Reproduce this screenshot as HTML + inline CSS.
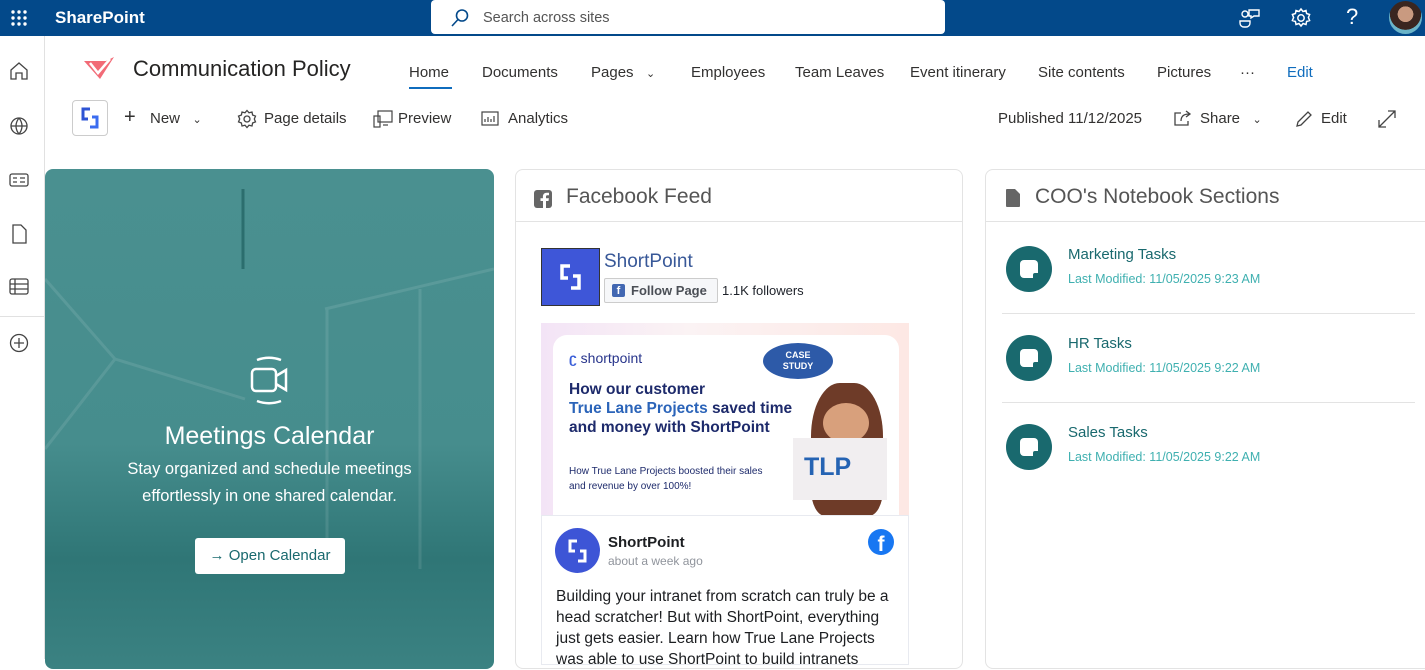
<!DOCTYPE html>
<html><head><meta charset="utf-8"><style>
*{box-sizing:border-box;margin:0;padding:0}
body{width:1425px;height:659px;overflow:hidden;background:#fff;font-family:"Liberation Sans",sans-serif;position:relative;color:#323130}
.abs{position:absolute}
.top{left:0;top:0;width:1425px;height:36px;background:#03498a}
.rail{left:0;top:36px;width:45px;height:623px;border-right:1px solid #e1e1e1;background:#fff}
.nav{top:64px;font-size:15px;color:#323130}
.cmd{top:110px;font-size:15px;color:#323130}
.card{border:1px solid #e3e3e3;border-radius:8px;background:#fff}
.sub{font-size:12.5px;color:#3fb0b0}
.tt{font-size:15px;color:#19696e}
.circ{width:46px;height:46px;border-radius:50%;background:#19696e}
.circ:after{content:"";position:absolute;left:14px;top:14px;width:18px;height:18px;background:#fff;border-radius:4px 4px 0 4px}
.circ:before{content:"";position:absolute;left:27px;top:27px;width:6px;height:6px;background:#19696e;z-index:1;border-top-left-radius:2px}
</style></head><body>
<div class="abs top"></div>
<svg class="abs" style="left:10px;top:9px" width="18" height="18" fill="#fff"><circle cx="3" cy="3" r="1.7"/><circle cx="9" cy="3" r="1.7"/><circle cx="15" cy="3" r="1.7"/><circle cx="3" cy="9" r="1.7"/><circle cx="9" cy="9" r="1.7"/><circle cx="15" cy="9" r="1.7"/><circle cx="3" cy="15" r="1.7"/><circle cx="9" cy="15" r="1.7"/><circle cx="15" cy="15" r="1.7"/></svg>
<div class="abs" style="left:55px;top:8px;color:#fff;font-size:17px;font-weight:bold">SharePoint</div>
<div class="abs" style="left:431px;top:0;width:514px;height:34px;background:#fff;border-radius:4px"></div>
<svg class="abs" style="left:450px;top:8px" width="20" height="20" fill="none" stroke="#03498a" stroke-width="1.6"><circle cx="12" cy="7.5" r="5.5"/><path d="M8 11.5 2 18"/></svg>
<div class="abs" style="left:483px;top:10px;font-size:14.5px;color:#555">Search across sites</div>
<svg class="abs" style="left:1239px;top:7px" width="22" height="22" fill="none" stroke="#fff" stroke-width="1.4"><circle cx="6" cy="7" r="3"/><path d="M1 14h10v2a4 4 0 0 1-4 4H5a4 4 0 0 1-4-4zM10 3h10v6h-5l-3 2v-2h-2z"/></svg>
<svg class="abs" style="left:1290px;top:7px" width="22" height="22" fill="none" stroke="#fff" stroke-width="1.5"><circle cx="11" cy="11" r="3.2"/><path d="M11 2l2 2.5 3-1 .6 3 3 1-1.2 3 1.2 3-3 1-.6 3-3-1-2 2.5-2-2.5-3 1-.6-3-3-1 1.2-3-1.2-3 3-1 .6-3 3 1z"/></svg>
<div class="abs" style="left:1346px;top:4px;color:#fff;font-size:22px">?</div>
<div class="abs" style="left:1389px;top:1px;width:33px;height:33px;border-radius:50%;background:radial-gradient(circle at 50% 40%,#c99a80 0 30%,#3a2620 31% 60%,#6ab4c8 61%)"></div>
<div class="abs rail"></div>
<svg class="abs" style="left:8px;top:60px" width="22" height="320" fill="none" stroke="#444" stroke-width="1.3">
<path d="M3 10 11 3l8 7v9h-5v-6H8v6H3z"/>
<circle cx="11" cy="66" r="8"/><path d="M3 66h16M11 58c-4 5-4 11 0 16M11 58c4 5 4 11 0 16"/>
<rect x="2" y="114" width="18" height="12" rx="2"/><path d="M5 118h4M5 122h4M12 118h5M12 122h5"/>
<path d="M5 165h8l5 5v13H5z"/>
<rect x="2" y="219" width="18" height="15" rx="2"/><path d="M2 224h18M2 229h18M7 219v15"/>
<circle cx="11" cy="283" r="8.5"/><path d="M11 278v10M6 283h10"/>
</svg>
<div class="abs" style="left:0;top:316px;width:44px;border-top:1px solid #e1e1e1"></div>
<svg class="abs" style="left:82px;top:55px" width="34" height="26"><path d="M2 6h22l8-4-14 22L2 6z" fill="#f26b77"/><path d="M8 8l8 10 12-14" stroke="#fff" stroke-width="2.5" fill="none"/></svg>
<div class="abs" style="left:133px;top:56px;font-size:22px;color:#252423">Communication Policy</div>
<div class="abs nav" style="left:409px">Home</div>
<div class="abs" style="left:409px;top:87px;width:43px;height:2px;background:#0f6cbd"></div>
<div class="abs nav" style="left:482px">Documents</div>
<div class="abs nav" style="left:591px">Pages&nbsp;&nbsp;&nbsp;<span style="font-size:11px">⌄</span></div>
<div class="abs nav" style="left:691px">Employees</div>
<div class="abs nav" style="left:795px">Team Leaves</div>
<div class="abs nav" style="left:910px">Event itinerary</div>
<div class="abs nav" style="left:1038px">Site contents</div>
<div class="abs nav" style="left:1157px">Pictures</div>
<div class="abs nav" style="left:1240px">···</div>
<div class="abs nav" style="left:1287px;color:#0f6cbd">Edit</div>
<div class="abs" style="left:72px;top:100px;width:36px;height:36px;border:1px solid #ccc;border-radius:4px"></div>
<svg class="abs" style="left:80px;top:107px" width="20" height="22" fill="none" stroke-width="3"><path d="M10 2H3v10h5" stroke="#2e54d4"/><path d="M10 20h7V10h-5" stroke="#3b6cf0"/></svg>
<div class="abs cmd" style="left:124px;font-size:20px;top:106px;font-weight:lighter">+</div>
<div class="abs cmd" style="left:150px">New&nbsp;&nbsp;&nbsp;<span style="font-size:11px">⌄</span></div>
<svg class="abs" style="left:237px;top:109px" width="20" height="20" fill="none" stroke="#444" stroke-width="1.3"><circle cx="10" cy="10" r="3"/><path d="M10 1.5l2 2.3 3-.8.6 3 2.9 1.1-1.2 2.9 1.2 2.9-2.9 1.1-.6 3-3-.8-2 2.3-2-2.3-3 .8-.6-3-2.9-1.1 1.2-2.9-1.2-2.9 2.9-1.1.6-3 3 .8z"/></svg>
<div class="abs cmd" style="left:264px">Page details</div>
<svg class="abs" style="left:373px;top:110px" width="20" height="18" fill="none" stroke="#444" stroke-width="1.2"><rect x="5" y="1" width="14" height="11"/><rect x="1" y="6" width="6" height="11"/><path d="M10 15h5"/></svg>
<div class="abs cmd" style="left:398px">Preview</div>
<svg class="abs" style="left:481px;top:111px" width="18" height="15" fill="none" stroke="#444" stroke-width="1.2"><rect x="1" y="1" width="16" height="13"/><path d="M4 11V8M7 11V6M10 11V8M13 11V5"/></svg>
<div class="abs cmd" style="left:508px">Analytics</div>
<div class="abs cmd" style="left:998px">Published 11/12/2025</div>
<svg class="abs" style="left:1173px;top:109px" width="20" height="18" fill="none" stroke="#444" stroke-width="1.3"><path d="M8 4H2v12h13v-4M8 12c0-5 3-7 8-7M13 2l4 3-4 3"/></svg>
<div class="abs cmd" style="left:1200px">Share&nbsp;&nbsp;&nbsp;<span style="font-size:11px">⌄</span></div>
<svg class="abs" style="left:1294px;top:109px" width="20" height="20" fill="none" stroke="#444" stroke-width="1.3"><path d="M3 17l1-4L14 3l3 3L7 16z"/></svg>
<div class="abs cmd" style="left:1321px">Edit</div>
<svg class="abs" style="left:1378px;top:110px" width="18" height="18" fill="none" stroke="#444" stroke-width="1.3"><path d="M1 17 17 1M10 1h7v7M1 10v7h7"/></svg>

<div class="abs" style="left:45px;top:169px;width:449px;height:500px;border-radius:8px;background:linear-gradient(180deg,#4a9090 0%,#468d8d 55%,#2f7676 78%,#3b8282 100%);overflow:hidden">
<svg class="abs" style="left:0;top:0" width="449" height="500" fill="none" stroke="rgba(255,255,255,.1)" stroke-width="3"><path d="M0 110 70 190 0 280M70 190 200 230M280 140 449 100M282 140V400M375 120V400"/><path d="M198 20V100" stroke="rgba(0,60,60,.4)"/></svg>
<svg class="abs" style="left:205px;top:186px" width="45" height="52" fill="none" stroke="#fff" stroke-width="2.5"><rect x="2" y="14" width="24" height="22" rx="4"/><path d="M26 21l10-6v20l-10-6M7 5c8-3 16-3 24 0M7 46c8 3 16 3 24 0"/></svg>
<div class="abs" style="left:0;width:449px;top:253px;text-align:center;color:#fff;font-size:25px">Meetings Calendar</div>
<div class="abs" style="left:0;width:449px;top:287px;text-align:center;color:#fff;font-size:16.5px;line-height:27px">Stay organized and schedule meetings<br>effortlessly in one shared calendar.</div>
<div class="abs" style="left:150px;top:369px;width:150px;height:36px;background:#fff;border-radius:3px;color:#19696e;font-size:15px;text-align:center;line-height:36px">→ Open Calendar</div>
</div>

<div class="abs card" style="left:515px;top:169px;width:448px;height:500px"></div>
<svg class="abs" style="left:533px;top:189px" width="20" height="20"><rect x="1" y="1" width="18" height="18" rx="3" fill="#666"/><path d="M13 19v-7h2.5l.4-2.8H13V7.6c0-.8.3-1.3 1.4-1.3H16V3.8c-.3 0-1.2-.1-2.3-.1-2.3 0-3.8 1.4-3.8 3.9v1.6H7.5V12H10v7z" fill="#fff"/></svg>
<div class="abs" style="left:566px;top:185px;font-size:21px;color:#555">Facebook Feed</div>
<div class="abs" style="left:516px;top:221px;width:446px;border-top:1px solid #e3e3e3"></div>
<div class="abs" style="left:541px;top:248px;width:59px;height:58px;background:#3e56d8;border:1px solid #333"></div>
<svg class="abs" style="left:559px;top:264px" width="24" height="26" fill="none" stroke="#fff" stroke-width="3.5"><path d="M11 2H3v12h6"/><path d="M12 24h8V12h-6"/></svg>
<div class="abs" style="left:604px;top:251px;font-size:19px;color:#385898">ShortPoint</div>
<div class="abs" style="left:604px;top:278px;width:114px;height:25px;border:1px solid #ccc;border-radius:2px;background:#f6f7f9;font-size:13px;font-weight:bold;color:#4b4f56;line-height:23px;padding-left:26px">Follow Page</div>
<div class="abs" style="left:612px;top:284px;width:13px;height:13px;background:#4267b2;border-radius:2px;color:#fff;font-size:11px;font-weight:bold;text-align:center;line-height:15px">f</div>
<div class="abs" style="left:722px;top:283px;font-size:13px;color:#1d2129">1.1K followers</div>
<div class="abs" style="left:541px;top:323px;width:368px;height:193px;background:linear-gradient(90deg,#f3e4f6,#fbf3f4 40%,#fde8e4);overflow:hidden">
<div class="abs" style="left:12px;top:12px;width:346px;height:181px;background:#fff;border-radius:14px 14px 0 0"></div>
<div class="abs" style="left:28px;top:27px;font-size:14px;color:#27348b"><b style="color:#3b5fd8">ʗ</b> shortpoint</div>
<div class="abs" style="left:222px;top:20px;width:70px;height:36px;border-radius:50%;background:#2d5aa8;color:#fff;font-size:9px;font-weight:bold;text-align:center;line-height:11px;padding-top:7px">CASE<br>STUDY</div>
<div class="abs" style="left:28px;top:57px;font-size:15.5px;font-weight:bold;color:#1d2a6b;line-height:19px">How our customer<br><span style="color:#2b64b9">True Lane Projects</span> saved time<br>and money with ShortPoint</div>
<div class="abs" style="left:28px;top:141px;font-size:10px;color:#1d2a6b;line-height:15px">How True Lane Projects boosted their sales<br>and revenue by over 100%!</div>
<div class="abs" style="left:270px;top:60px;width:72px;height:133px;border-radius:40% 40% 20% 20%;background:#6e3b28"></div>
<div class="abs" style="left:282px;top:80px;width:46px;height:40px;border-radius:50%;background:#d8a07c"></div>
<div class="abs" style="left:252px;top:115px;width:94px;height:62px;background:#f1eef0"></div>
<div class="abs" style="left:263px;top:130px;font-size:25px;font-weight:bold;color:#2563b3">TLP</div>
</div>
<div class="abs" style="left:541px;top:515px;width:368px;height:150px;border:1px solid #e8eaf0;background:#fff"></div>
<div class="abs" style="left:555px;top:528px;width:45px;height:45px;border-radius:50%;background:#3d55d6"></div>
<svg class="abs" style="left:567px;top:539px" width="22" height="24" fill="none" stroke="#fff" stroke-width="3"><path d="M10 2H3v10h5"/><path d="M11 22h7V12h-5"/></svg>
<div class="abs" style="left:608px;top:534px;font-size:15px;font-weight:bold;color:#1c1e21">ShortPoint</div>
<div class="abs" style="left:608px;top:554px;font-size:12px;color:#90949c">about a week ago</div>
<div class="abs" style="left:868px;top:529px;width:26px;height:26px;border-radius:50%;background:#1877f2;color:#fff;font-size:21px;font-weight:bold;text-align:center;line-height:31px;overflow:hidden">f</div>
<div class="abs" style="left:556px;top:586px;font-size:15.5px;line-height:21px;color:#1c1e21;width:350px">Building your intranet from scratch can truly be a head scratcher! But with ShortPoint, everything just gets easier. Learn how True Lane Projects was able to use ShortPoint to build intranets</div>

<div class="abs card" style="left:985px;top:169px;width:450px;height:500px"></div>
<svg class="abs" style="left:1006px;top:189px" width="14" height="18"><path d="M0 1a1 1 0 0 1 1-1h8l5 5v12a1 1 0 0 1-1 1H1a1 1 0 0 1-1-1z" fill="#666"/></svg>
<div class="abs" style="left:1035px;top:185px;font-size:21px;color:#555">COO's Notebook Sections</div>
<div class="abs" style="left:986px;top:221px;width:439px;border-top:1px solid #e3e3e3"></div>
<div class="abs circ" style="left:1006px;top:246px"></div>
<div class="abs tt" style="left:1068px;top:246px">Marketing Tasks</div>
<div class="abs sub" style="left:1068px;top:272px">Last Modified: 11/05/2025 9:23 AM</div>
<div class="abs" style="left:1002px;top:313px;width:413px;border-top:1px solid #e3e3e3"></div>
<div class="abs circ" style="left:1006px;top:335px"></div>
<div class="abs tt" style="left:1068px;top:335px">HR Tasks</div>
<div class="abs sub" style="left:1068px;top:361px">Last Modified: 11/05/2025 9:22 AM</div>
<div class="abs" style="left:1002px;top:402px;width:413px;border-top:1px solid #e3e3e3"></div>
<div class="abs circ" style="left:1006px;top:424px"></div>
<div class="abs tt" style="left:1068px;top:424px">Sales Tasks</div>
<div class="abs sub" style="left:1068px;top:450px">Last Modified: 11/05/2025 9:22 AM</div>
</body></html>
